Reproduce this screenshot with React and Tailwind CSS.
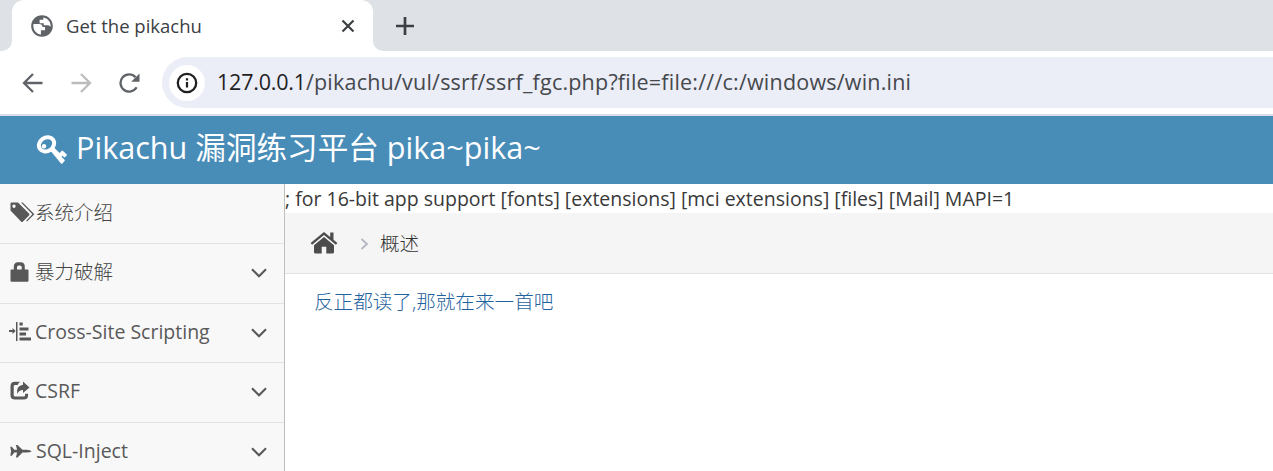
import React from "react";

const Svg = ({ w, h, className = "", children, ...rest }) => (
  <svg width={w} height={h} viewBox={`0 0 ${w} ${h}`} className={`block shrink-0 ${className}`} fill="currentColor" {...rest}>
    {children}
  </svg>
);

const Globe = () => (
  <svg width="26" height="26" viewBox="0 0 24 24" className="block shrink-0 text-[#5f6368]" fill="currentColor">
    <path d="M12 2C6.480 2 2 6.480 2 12s4.480 10 10 10 10-4.480 10-10S17.520 2 12 2zm-1 17.930c-3.950-.490-7-3.850-7-7.930 0-.620.080-1.210.210-1.790h5.200c1.900 0 3.100 1 3.100 2.600h2.300v3.200h-3.800v3.920zM19.900 12.700c-.900-.800-1.700-1.300-2.900-1.300h-3.300V9.400H9.800V6.300h3.400V4.100c3.900.600 6.800 3.900 6.800 7.900 0 .240-.040.480-.100.700z" />
  </svg>
);

const Key = () => (
  <Svg w={32} h={30} className="text-white">
    <ellipse cx="10.500" cy="9.300" rx="8" ry="6.700" transform="rotate(-35 10.500 9.300)" fill="none" stroke="currentColor" strokeWidth="4" />
    <circle cx="8" cy="11.300" r="2.200" />
    <path d="M14 15.200 17.200 11.800 23.600 18l2-2.100q.700-.700 1.400 0l3.600 3.300q.700.700 0 1.400l-1.300 1.400q-.700.700-1.400 0l-1.500-1.300-.900 1 3 3q.700.700 0 1.400l-2.100 2.300q-.700.700-1.400 0z" />
  </Svg>
);

const Tags = () => (
  <Svg w={25} h={21}>
    <path fillRule="evenodd" d="M.500 1.500Q.500.500 1.500.500H8l11 11q1 1 0 2l-6 6q-1 1-2 0L.500 8.500zM4 2.500a1.700 1.700 0 1 0 .010 0z" />
    <path d="M11 .500h1.700L24.400 12.200 17.100 19.600l-.900-.900 6.200-6.500z" />
  </Svg>
);

const Lock = () => (
  <Svg w={19} h={20}>
    <path fillRule="evenodd" d="M3.800 7.500V4.900Q3.800.300 8 .300h2.800q4 0 4 4.600v2.600H17.500q1 0 1 1v10.200q0 1-1 1H1.500q-1 0-1-1V8.500q0-1 1-1zM7 7.500h4.700V5.200q0-1.700-1.700-1.700H8.700q-1.700 0-1.700 1.700z" />
  </Svg>
);

const Indent = () => (
  <Svg w={24} h={19}>
    <path d="M0 8h3.500V6l3.200 3-3.200 3v-2H0zM7 0h1.500v19H7zM10.500.500h3.200v3h-3.200zM10.500 5.500H19.500v3h-9zM10.500 10.500H17v3h-6.500zM10.500 15.500H22v3H10.500z" />
  </Svg>
);

const Share = () => (
  <Svg w={20} h={19}>
    <path d="M10 .800H5Q.500.800.500 5.200v9Q.500 18.500 5 18.500h8.800q4.300 0 4.300-4.300v-1.500h-3v1.500q0 1.400-1.400 1.400H5.200q-1.500 0-1.500-1.400V5.300q0-1.400 1.500-1.400h2.500Q8.300 2.200 10 .800z" />
    <path d="M13 .500 19.500 6.600 13 12V8.900Q9 8.900 7.200 13 5.900 4.500 13 3.700z" />
  </Svg>
);

const Plane = () => (
  <Svg w={22} h={14}>
    <path d="M.300 2.700h1.500l2.500 3.100h2.800L5.900 1h1.600l5 4.800h4q3.800.300 5.200 1.400-1.400 1.100-5.200 1.400h-4l-5 4.800H5.900l1.200-4.800H4.300l-2.500 3.100H.300l.800-4.500z" />
  </Svg>
);

const Home = () => (
  <Svg w={28} h={24} className="text-[#4c4c4c]">
    <path d="M14 1 .600 12l1.500 1.700L14 4.100l11.900 9.600 1.500-1.700-3.900-3.200V1.500h-3.300v4.600z" />
    <path d="M14 6 4 14.200V21q0 1.500 1.500 1.500h6.200v-6.700h4.600v6.700h6.200Q24 22.500 24 21v-6.800z" />
  </Svg>
);

const Chevron = () => (
  <Svg w={16} h={10} fill="none" stroke="currentColor" strokeWidth="2.100">
    <path d="M1 1.200 8 8.200 15 1.200" />
  </Svg>
);

const items = [
  { label: "系统介绍", Icon: Tags, slot: "w-[25px]", row: "h-[60px] pb-[2px]", cjk: true },
  { label: "暴力破解", Icon: Lock, slot: "w-[25px]", row: "h-[60px] pb-[3px]", cjk: true, open: true },
  { label: "Cross-Site Scripting", Icon: Indent, slot: "-ml-px w-[26px]", row: "h-[59px] pb-[3px]", open: true },
  { label: "CSRF", Icon: Share, slot: "w-[25px]", row: "h-[60px] pb-[4px]", open: true },
  { label: "SQL-Inject", Icon: Plane, slot: "w-[26px]", row: "h-[60px] pb-[4px]", open: true },
];

export default function App() {
  return (
    <div className="flex h-[471px] w-full flex-col overflow-hidden bg-white font-['Open_Sans','Noto_Sans_CJK_SC',sans-serif] text-[19.5px] text-[#393939]">
      <div className="flex h-[51px] shrink-0 bg-[#dee1e6]">
        <div className="w-3 bg-white">
          <div className="h-full rounded-br-[10px] bg-[#dee1e6]" />
        </div>
        <div className="w-[361px] bg-[#dee1e6]">
          <div className="flex h-full items-center rounded-t-[12px] bg-white pl-[17px] pr-[18px]">
            <Globe />
            <span className="ml-[11px] whitespace-nowrap pt-px text-[18.5px] text-[#3c4043]">Get the pikachu</span>
            <Svg w={14} h={14} className="ml-auto text-[#3c4043]" stroke="currentColor" strokeWidth="2.200">
              <path d="M1.500 1.500l11 11M12.500 1.500l-11 11" />
            </Svg>
          </div>
        </div>
        <div className="flex-1 bg-white">
          <div className="flex h-full items-center rounded-bl-[10px] bg-[#dee1e6] pl-[23px]">
            <Svg w={18} h={18} className="text-[#3c4043]" stroke="currentColor" strokeWidth="2.700">
              <path d="M9 0v18M0 9h18" />
            </Svg>
          </div>
        </div>
      </div>

      <div className="flex h-[65px] shrink-0 items-start border-b-2 border-[#dcddea] bg-white pt-[6px]">
        <div className="flex h-[51px] w-[162px] items-center pl-[22px]">
          <Svg w={22} h={20} fill="none" stroke="#5f6368" strokeWidth="2.300">
            <path d="M20.500 10H2.500M11 1 2 10l9 9" />
          </Svg>
          <Svg w={22} h={20} className="ml-[26px]" fill="none" stroke="#babcbe" strokeWidth="2.300">
            <path d="M1.500 10h18M11 1l9 9-9 9" />
          </Svg>
          <Svg w={22} h={20} className="ml-[27px] text-[#5f6368]">
            <path d="M17.600 14.200A8.600 8.600 0 1 1 16.500 4.200" fill="none" stroke="currentColor" strokeWidth="2.300" />
            <path d="M20.500.500v8.300h-8.300z" />
          </Svg>
        </div>
        <div className="flex h-[51px] flex-1 items-center rounded-l-full bg-[#ebedf7] pl-[7px]">
          <div className="flex size-9 items-center justify-center rounded-full bg-white">
            <Svg w={22} h={22} className="text-[#1f1f1f]">
              <circle cx="11" cy="11" r="9.200" fill="none" stroke="currentColor" strokeWidth="2.300" />
              <path d="M9.900 10h2.200v5.600H9.900zM9.900 6.300h2.200v2.200H9.900z" />
            </Svg>
          </div>
          <span className="ml-[12px] whitespace-nowrap text-[21.5px] tracking-[0.210px] text-[#45484c]">
            <span className="tracking-[-0.200px] text-[#1f1f1f]">127.0.0.1</span>/pikachu/vul/ssrf/ssrf_fgc.php?file=file:///c:/windows/win.ini
          </span>
        </div>
      </div>

      <div className="flex h-[68px] shrink-0 items-center bg-[#488cb8] pl-[36px] text-[30.600px] text-white">
        <Key />
        <span className="ml-[8px] whitespace-nowrap pb-[5px]">Pikachu 漏洞练习平台 pika~pika~</span>
      </div>

      <div className="flex min-h-0 flex-1">
        <nav className="w-[285px] shrink-0 overflow-hidden border-r border-[#bfbfbf] bg-[#f8f8f8] text-[#585858]">
          {items.map(({ label, Icon, slot, row, cjk, open }) => (
            <div key={label} className={`flex items-center border-b border-[#e2e2e2] pl-[10px] pr-[17px] ${row}`}>
              <span className={`flex shrink-0 ${slot}`}><Icon /></span>
              <span className={cjk ? "whitespace-nowrap font-light text-[#444]" : "whitespace-nowrap"}>{label}</span>
              {open && <span className="ml-auto pt-[2px]"><Chevron /></span>}
            </div>
          ))}
        </nav>
        <main className="min-w-0 flex-1">
          <div className="flex h-[29px] items-center whitespace-nowrap">; for 16-bit app support [fonts] [extensions] [mci extensions] [files] [Mail] MAPI=1</div>
          <div className="flex h-[61px] items-center border-b border-[#e3e3e3] bg-[#f5f5f5] pl-[25px]">
            <Home />
            <Svg w={9} h={12} className="ml-[22px] mt-[2px]" fill="none" stroke="#b2b6bf" strokeWidth="1.800">
              <path d="M1.500 1l5.500 5-5.500 5" />
            </Svg>
            <span className="ml-[11px] pt-px font-light text-[#333]">概述</span>
          </div>
          <div className="flex h-[55px] items-center pl-[29px] text-[19.600px] font-light text-[#1f629e]">反正都读了,那就在来一首吧</div>
        </main>
      </div>
    </div>
  );
}
